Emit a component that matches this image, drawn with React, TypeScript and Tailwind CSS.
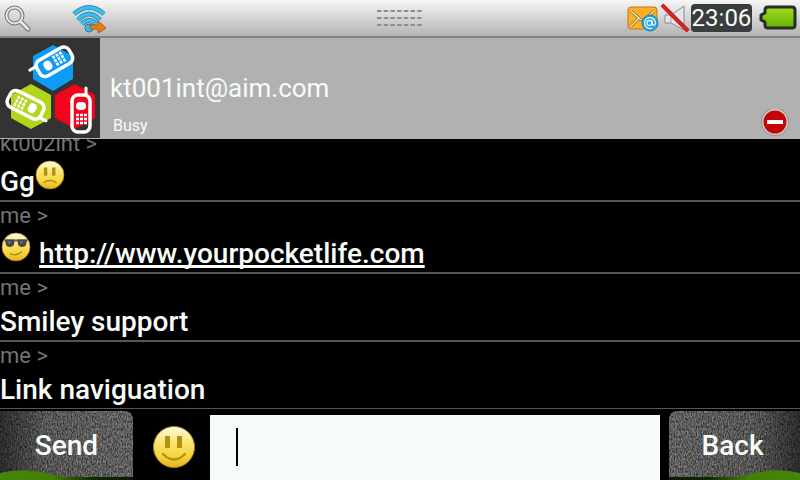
import { useState, type ReactNode } from "react"

type Message = {
  id: number
  from: string
  body: ReactNode
  tall?: boolean
}

type Mood = "happy" | "sad" | "cool"

function Smiley({ mood, className }: { mood: Mood; className: string }) {
  const gradientId = `face-${mood}`
  return (
    <svg viewBox="0 0 44 44" className={className} aria-hidden="true">
      <defs>
        <linearGradient id={gradientId} x1="0" y1="0" x2="0" y2="1">
          <stop offset="0" stopColor="#fffbe6" />
          <stop offset="0.35" stopColor="#fbe67a" />
          <stop offset="0.75" stopColor="#f7d335" />
          <stop offset="1" stopColor="#e3b021" />
        </linearGradient>
      </defs>
      <circle cx="22" cy="22" r="20.500" fill={`url(#${gradientId})`} stroke="#a8811c" strokeWidth="1" />
      {mood === "cool" ? (
        <g>
          <path d="M5 11h34v3H5z" fill="#6a6b60" />
          <path d="M6 11h14l-1 7q-1 4-6 4t-6-4zM24 11h14l-1 7q-1 4-6 4t-6-4z" fill="#45474a" />
          <path d="M9 14h6l-3 4zM27 14h6l-3 4z" fill="#73767c" />
        </g>
      ) : (
        <g fill="#b09312">
          <rect x="13" y="11" width="5" height="12" />
          <rect x="25" y="11" width="5" height="12" />
        </g>
      )}
      <path
        d={mood === "sad" ? "M13 33q9-6 18 0" : mood === "cool" ? "M14 32q9 4 16-3" : "M11 29q11 11 22 0"}
        fill="none"
        stroke="#b08c16"
        strokeWidth="2.200"
        strokeLinecap="round"
      />
    </svg>
  )
}

function Phone() {
  return (
    <g>
      <path d="M5 -18V-25" stroke="#fff" strokeWidth="3" strokeLinecap="round" />
      <rect x="-9" y="-18" width="18" height="37" rx="6" fill="none" stroke="#fff" strokeWidth="3.500" />
      <rect x="-5" y="-11" width="10" height="8" rx="4" fill="#fff" />
      <path
        d="M-5 2h3M-1 2h3M3 2h3M-5 6h3M-1 6h3M3 6h3M-5 10h3M-1 10h3M3 10h3"
        stroke="#fff"
        strokeWidth="2.600"
      />
    </g>
  )
}

function Avatar() {
  return (
    <svg viewBox="0 0 100 100" className="size-[100px] shrink-0 bg-[#333333]" aria-label="Contact picture">
      <path d="M53 7l20 11v23l-20 12-20-12V18z" fill="#0c9cf5" />
      <path d="M31 46l20 11v23l-20 11-20-11V57z" fill="#b2d61c" />
      <path d="M75 46l20 11v23l-20 11-20-11V57z" fill="#f4031b" />
      <g transform="translate(54 24) rotate(-120)">
        <Phone />
      </g>
      <g transform="translate(26 67) rotate(117)">
        <Phone />
      </g>
      <g transform="translate(81 75)">
        <Phone />
      </g>
    </svg>
  )
}

function SearchIcon() {
  return (
    <svg viewBox="0 0 28 28" className="size-7" fill="none" strokeLinecap="round" aria-hidden="true">
      <path d="M17 18l7 7" stroke="#777" strokeWidth="5" />
      <circle cx="10.500" cy="11.500" r="8" stroke="#777" strokeWidth="4" />
      <path d="M17 18l7 7" stroke="#e8e8e8" strokeWidth="2.800" />
      <circle cx="10.500" cy="11.500" r="8" stroke="#e8e8e8" strokeWidth="2" />
    </svg>
  )
}

function WifiIcon() {
  return (
    <svg viewBox="0 0 36 30" className="h-[30px] w-9" fill="none" aria-hidden="true">
      <g stroke="#347a99" strokeWidth="4.800">
        <path d="M2 11Q17-2 32 11" />
        <path d="M6 17Q17 5 28 17" />
        <path d="M10 21Q17 14 24 21" />
      </g>
      <g stroke="#37bdef" strokeWidth="3.400">
        <path d="M2 11Q17-2 32 11" />
        <path d="M6 17Q17 5 28 17" />
        <path d="M10 21Q17 14 24 21" />
      </g>
      <circle cx="17" cy="25" r="4" fill="#37bdef" stroke="#347a99" />
      <path d="M18 22h8v-4l8 7-8 5v-4h-8z" fill="#f57a0c" stroke="#99602a" />
    </svg>
  )
}

function DragHandle() {
  return (
    <svg viewBox="0 0 46 20" className="h-5 w-[46px]" aria-hidden="true">
      {[3, 10, 17].map((y) => (
        <path key={y} d={`M0 ${y}h46`} stroke="#8e8e8e" strokeWidth="2" strokeDasharray="4.500 2.200" />
      ))}
    </svg>
  )
}

function MailIcon() {
  return (
    <svg viewBox="0 0 34 28" className="h-7 w-[34px]" aria-hidden="true">
      <rect x="1" y="3" width="29" height="22" rx="3" fill="#fbb021" stroke="#b97b18" />
      <path d="M4 7l9 8q3 2 6 0l8-8M4 22l8-8M26 21l-6-6" fill="none" stroke="#7b6431" strokeWidth="2.800" />
      <path d="M4 7l9 8q3 2 6 0l8-8M4 22l8-8M26 21l-6-6" fill="none" stroke="#fff0c8" strokeWidth="1.400" />
      <circle cx="23" cy="19" r="8" fill="#2aa6dc" stroke="#2583ac" />
      <circle cx="22.500" cy="19" r="2.500" fill="none" stroke="#e1f5ff" strokeWidth="1.300" />
      <path d="M25 16v4q3 3 3.500-1a5.500 5.500 0 1 0-3 5" fill="none" stroke="#e1f5ff" strokeWidth="1.300" />
    </svg>
  )
}

function MutedIcon() {
  return (
    <svg viewBox="0 0 30 30" className="size-[30px]" aria-hidden="true">
      <path d="M4 12h6L23 3v24l-13-7H4z" fill="#e6e6e6" stroke="#888" strokeLinejoin="round" />
      <path d="M10 12v8" stroke="#aaa" />
      <path d="M1 2l26 26" stroke="#a91b1b" strokeWidth="4" />
      <path d="M1 2l26 26" stroke="#db2424" strokeWidth="2.600" />
    </svg>
  )
}

function BatteryIcon() {
  return (
    <svg viewBox="0 0 40 28" className="h-7 w-[42px]" aria-hidden="true">
      <defs>
        <linearGradient id="battery" x1="0" y1="0" x2="0" y2="1">
          <stop offset="0" stopColor="#a2db20" />
          <stop offset="1" stopColor="#66b005" />
        </linearGradient>
      </defs>
      <path
        d="M9 3h24q3 0 3 3v15q0 3-3 3H9q-3 0-3-3v-3l-4-2v-5l4-2V6q0-3 3-3z"
        fill="url(#battery)"
        stroke="#292d29"
        strokeWidth="3"
        strokeLinejoin="round"
      />
    </svg>
  )
}

// Brushed stone background with a bit of the leaf showing at the bottom
function StoneTexture({ flip }: { flip?: boolean }) {
  const id = flip ? "stone-right" : "stone-left"
  return (
    <svg
      viewBox="0 0 133 69"
      preserveAspectRatio="none"
      className={flip ? "absolute inset-0 size-full -scale-x-100" : "absolute inset-0 size-full"}
      aria-hidden="true"
    >
      <defs>
        <filter id={`${id}-grain`} x="0" y="0" width="1" height="1" colorInterpolationFilters="sRGB">
          <feTurbulence type="fractalNoise" baseFrequency="0.8 0.4" numOctaves="3" seed="4" />
          <feColorMatrix values="0.6 0 0 0 0.07  0.6 0 0 0 0.07  0.6 0 0 0 0.07  0 0 0 0 1" />
        </filter>
        <linearGradient id={`${id}-shade`}>
          <stop offset="0" stopColor="#000" stopOpacity="0.55" />
          <stop offset="0.35" stopColor="#000" stopOpacity="0.1" />
          <stop offset="1" stopColor="#000" stopOpacity="0" />
        </linearGradient>
        <linearGradient id={`${id}-leaf`}>
          <stop offset="0" stopColor="#448607" />
          <stop offset="0.4" stopColor="#417e05" />
          <stop offset="0.7" stopColor="#132802" />
          <stop offset="1" stopColor="#0c1802" />
        </linearGradient>
        <clipPath id={`${id}-clip`}>
          <path d="M0 0h124q9 0 9 9v57H0z" />
        </clipPath>
      </defs>
      <path d="M0 60h133v9H0z" fill="#111b07" />
      <g clipPath={`url(#${id}-clip)`}>
        <rect width="133" height="69" filter={`url(#${id}-grain)`} />
        <rect width="133" height="69" fill={`url(#${id}-shade)`} />
      </g>
      <path d="M0 62q20-5 42-1 15 5 33 5h58v3H0z" fill={`url(#${id}-leaf)`} />
    </svg>
  )
}

function SoftKey({ label, flip }: { label: string; flip?: boolean }) {
  return (
    <button
      type="button"
      className={
        flip
          ? "relative h-[69px] w-[131px] shrink-0 self-end pr-1 text-[28px] leading-9 font-medium"
          : "relative h-[69px] w-[133px] shrink-0 self-end text-[28px] leading-9 font-medium"
      }
    >
      <StoneTexture flip={flip} />
      <span className="relative">{label}</span>
    </button>
  )
}

const messages: Message[] = [
  {
    id: 1,
    from: "kt002int",
    tall: true,
    body: (
      <>
        Gg
        <Smiley mood="sad" className="mb-[10px] size-[30px]" />
      </>
    ),
  },
  {
    id: 2,
    from: "me",
    tall: true,
    body: (
      <>
        <Smiley mood="cool" className="mr-2 mb-[10px] ml-px size-[30px]" />
        <a
          href="http://www.yourpocketlife.com"
          className="underline decoration-[3px] underline-offset-2 [text-decoration-skip-ink:none]"
        >
          http://www.yourpocketlife.com
        </a>
      </>
    ),
  },
  { id: 3, from: "me", body: "Smiley support" },
  { id: 4, from: "me", body: "Link naviguation" },
]

export default function App() {
  const [draft, setDraft] = useState("")

  return (
    <div className="flex h-screen flex-col bg-black font-[Roboto,'Noto_Sans',sans-serif] text-[#f7fcf8]">
      {/* Status bar */}
      <div className="grid h-[38px] shrink-0 grid-cols-3 items-center border-b-2 border-[#828282] bg-linear-to-b from-[#f6f6f6] to-[#b4b4b4]">
        <div className="flex items-center gap-10 pl-1">
          <SearchIcon />
          <WifiIcon />
        </div>
        <div className="flex justify-center">
          <DragHandle />
        </div>
        <div className="flex items-center justify-end">
          <MailIcon />
          <MutedIcon />
          <time className="mr-[6px] h-7 w-[61px] rounded bg-[#3a3d3d] text-center text-2xl leading-7">23:06</time>
          <BatteryIcon />
        </div>
      </div>

      {/* Contact */}
      <header className="flex h-[101px] shrink-0 bg-[#b1b1b1]">
        <Avatar />
        <div className="flex flex-1 flex-col justify-end pl-[10px]">
          <h1 className="text-[26px] leading-9">kt001int@aim.com</h1>
          <p className="mt-2 pb-px pl-[3px] text-base leading-6">Busy</p>
        </div>
        <svg viewBox="0 0 30 30" className="mr-[10px] size-[30px] self-end" aria-label="Busy">
          <circle cx="15" cy="13" r="14" fill="#929292" />
          <circle cx="15" cy="13" r="13" fill="#d5cdcb" />
          <circle cx="15" cy="13" r="11.500" fill="#c30507" />
          <path d="M7 11h16v4H7z" fill="#fff" />
        </svg>
      </header>

      {/* Conversation */}
      <ul className="flex min-h-0 flex-1 flex-col justify-end overflow-hidden">
        {messages.map((m) => (
          <li key={m.id} className="shrink-0 border-b-2 border-[#555555] last:border-b">
            <p className="h-7 text-[22px] leading-7 text-[#737373]">{m.from} &gt;</p>
            <div
              className={
                m.tall
                  ? "flex h-[42px] items-end text-[28px] leading-9 font-medium"
                  : "flex h-[38px] items-end text-[28px] leading-9 font-medium"
              }
            >
              {m.body}
            </div>
          </li>
        ))}
      </ul>

      {/* Composer */}
      <form className="flex h-[71px] shrink-0" onSubmit={(e) => e.preventDefault()}>
        <SoftKey label="Send" />
        <button type="button" aria-label="Insert smiley" className="flex w-[77px] shrink-0 items-center justify-center pt-1 pl-1">
          <Smiley mood="happy" className="size-11" />
        </button>
        <div className="relative mt-[6px] mr-[9px] flex-1 bg-[#f6fdf8]">
          <input
            type="text"
            aria-label="Message"
            value={draft}
            onChange={(e) => setDraft(e.target.value)}
            className="size-full px-[26px] text-[28px] text-black caret-transparent outline-none"
          />
          {!draft && <span className="absolute top-[13px] left-[26px] h-[38px] w-[2px] bg-black" />}
        </div>
        <SoftKey label="Back" flip />
      </form>
    </div>
  )
}
